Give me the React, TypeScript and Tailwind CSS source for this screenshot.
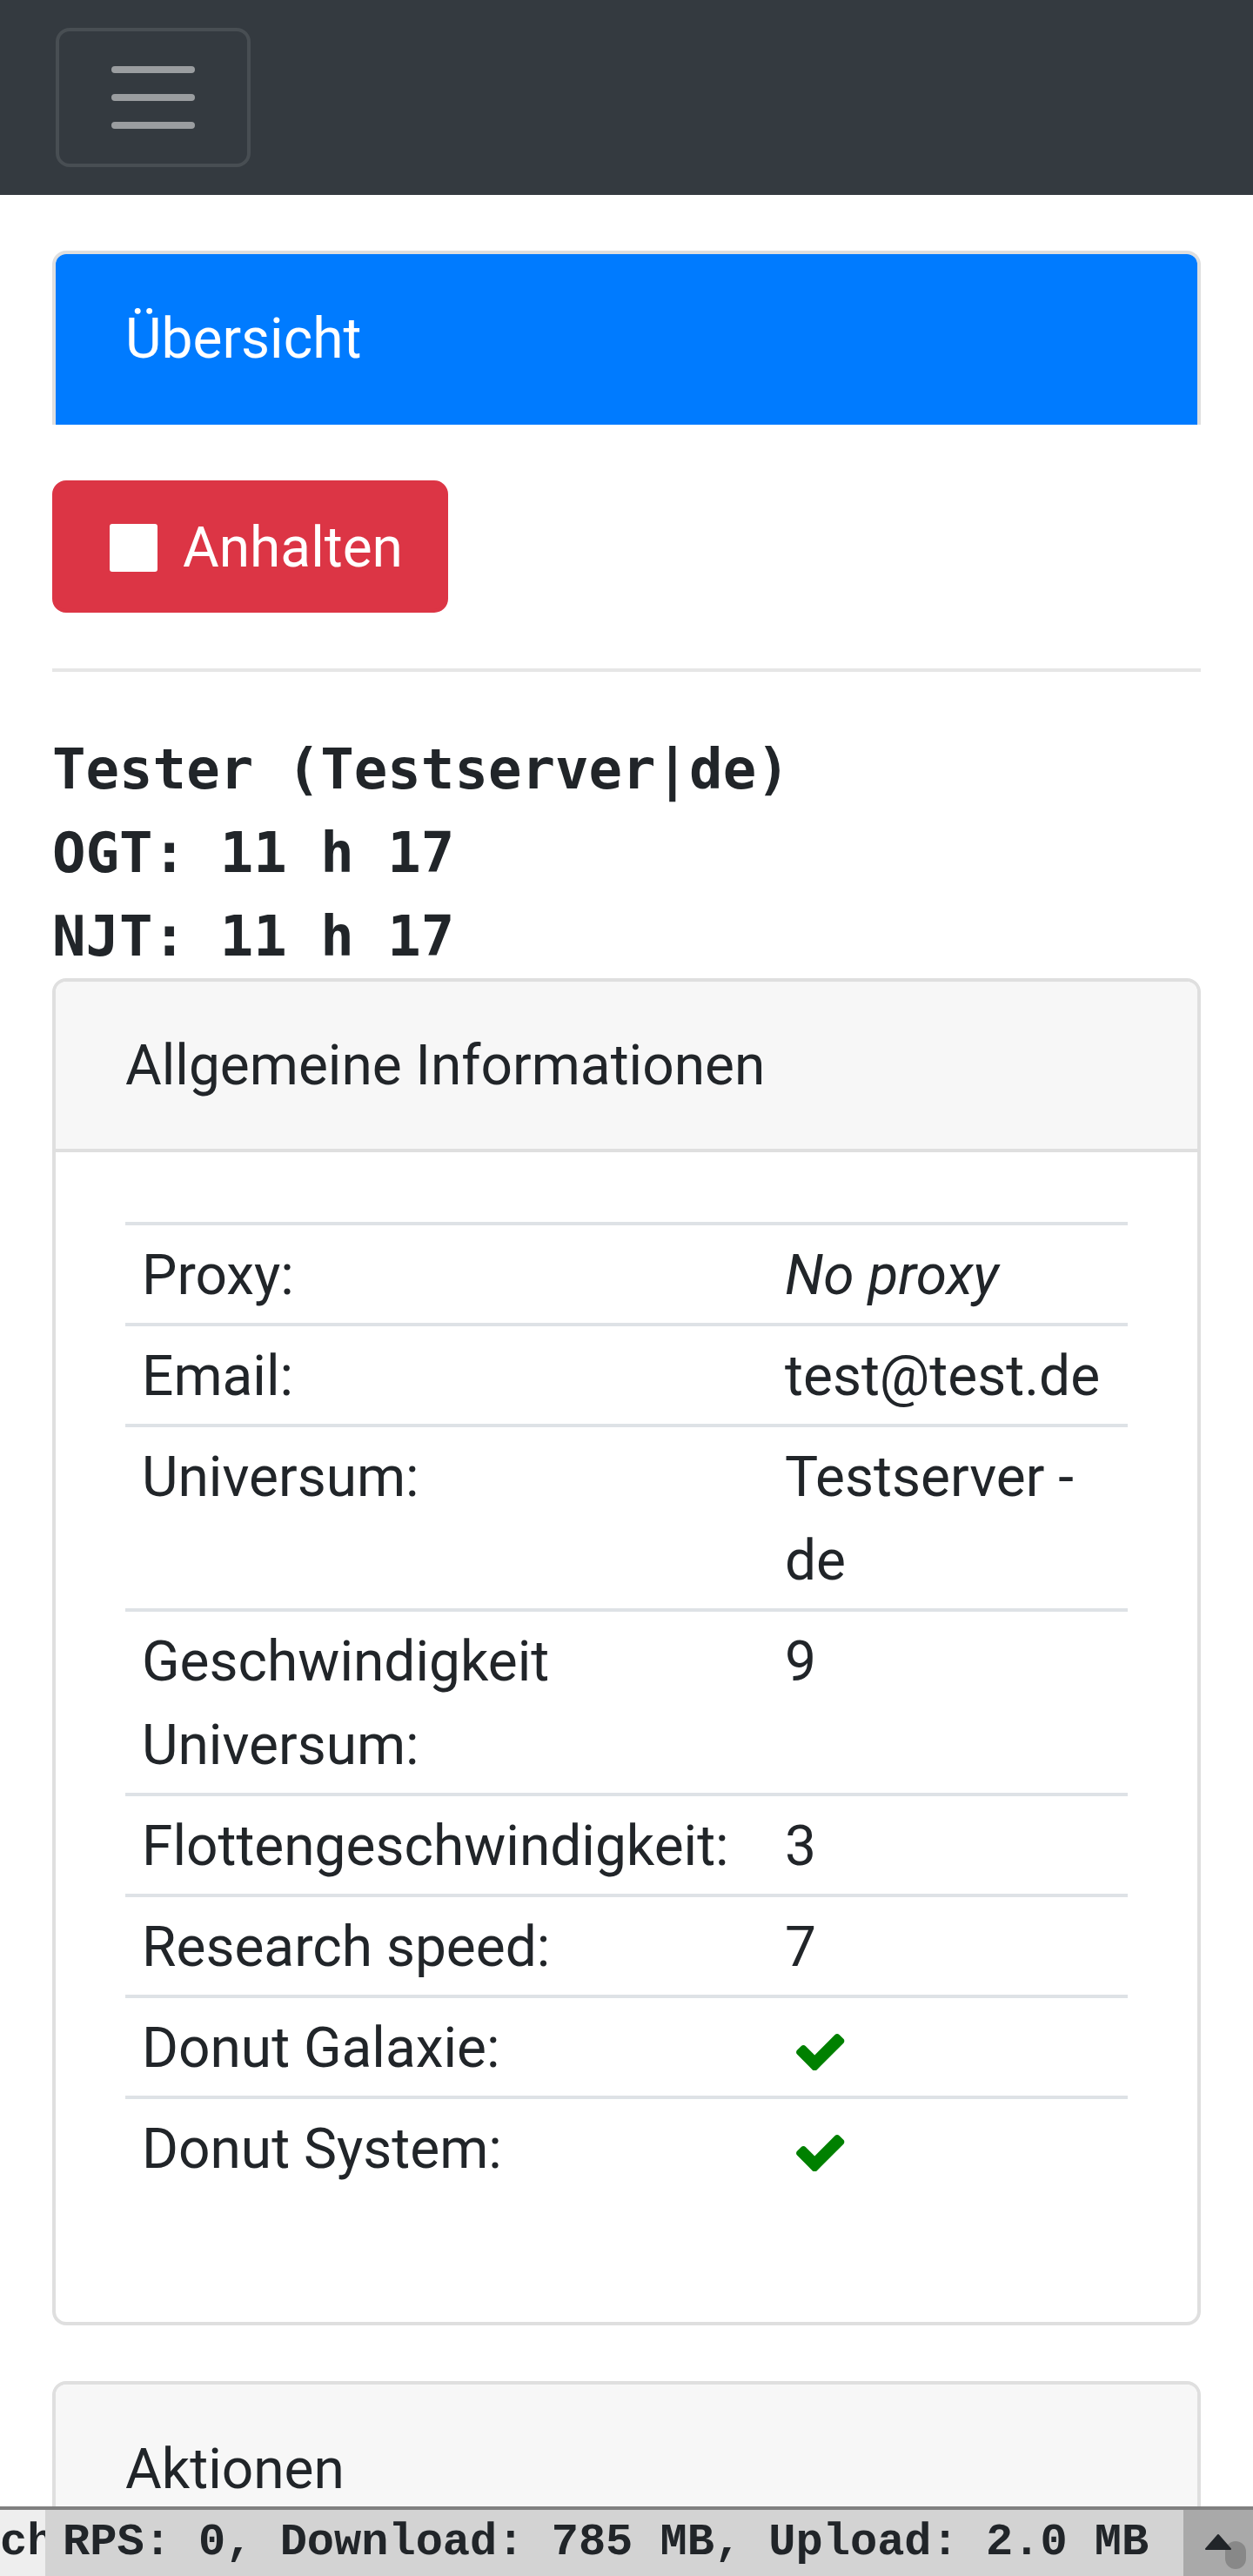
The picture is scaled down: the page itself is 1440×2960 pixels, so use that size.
import React from "react";

function Check() {
  return (
    <span className="inline-block w-[82px] text-center">
      <svg
        className="inline-block"
        width="55.4"
        height="42.4"
        viewBox="121 334 1550 1188"
        fill="#008000"
      >
        <path d="M1671 566q0 40-28 68l-724 724-136 136q-28 28-68 28t-68-28l-136-136-362-362q-28-28-28-68t28-68l136-136q28-28 68-28t68 28l294 295 656-657q28-28 68-28t68 28l136 136q28 28 28 68z" />
      </svg>
    </span>
  );
}

type Row = { label: string; value: React.ReactNode };

const rows: Row[] = [
  { label: "Proxy:", value: <span className="italic">No proxy</span> },
  { label: "Email:", value: "test@test.de" },
  { label: "Universum:", value: "Testserver - de" },
  { label: "Geschwindigkeit Universum:", value: "9" },
  { label: "Flottengeschwindigkeit:", value: "3" },
  { label: "Research speed:", value: "7" },
  { label: "Donut Galaxie:", value: <Check /> },
  { label: "Donut System:", value: <Check /> },
];

export default function App() {
  return (
    <div className="min-h-[2960px] bg-white font-['Roboto',sans-serif] text-[64px] leading-[96px] text-[#212529]">
      <nav className="bg-[#343a40] px-[64px] py-[32px]">
        <button className="flex h-[160px] w-[224px] items-center justify-center rounded-[16px] border-4 border-[#484e53]">
          <svg width="120" height="120" viewBox="0 0 30 30">
            <path
              d="M4 7h22M4 15h22M4 23h22"
              stroke="rgba(255,255,255,0.5)"
              strokeWidth="2"
              strokeLinecap="round"
            />
          </svg>
        </button>
      </nav>

      <main className="px-[60px] pt-[64px] pb-[200px]">
        <div className="mb-[64px] rounded-t-[16px] border-x-4 border-t-4 border-[#dfdfdf]">
          <div className="h-[196px] rounded-t-[12px] bg-[#007bff] px-[80px] pt-[50px] text-white">
            Übersicht
          </div>
        </div>

        <button className="flex w-fit items-center gap-[16px] rounded-[16px] border-4 border-[#dc3545] bg-[#dc3545] px-[48px] pt-[26px] pb-[22px] text-white">
          <span className="flex h-[96px] w-[82px] items-center justify-center">
            <span className="mt-[-1px] h-[55px] w-[55px] rounded-[3px] bg-white" />
          </span>
          <span>Anhalten</span>
        </button>

        <hr className="my-[64px] border-t-4 border-[#e6e6e6]" />

        <div className="font-['DejaVu_Sans_Mono',monospace] font-bold">
          <div>Tester (Testserver|de)</div>
          <div>OGT: 11 h 17</div>
          <div>NJT: 11 h 17</div>
        </div>

        <div className="rounded-[16px] border-4 border-[#dfdfdf]">
          <div className="rounded-t-[12px] border-b-4 border-[#dfdfdf] bg-[#f7f7f7] px-[80px] pt-[49px] pb-[47px]">
            Allgemeine Informationen
          </div>
          <div className="p-[80px]">
            <table className="mb-[64px] w-full table-fixed border-separate border-spacing-0">
              <colgroup>
                <col className="w-[739px]" />
                <col />
              </colgroup>
              <tbody>
                {rows.map((r) => (
                  <tr key={r.label}>
                    <td className="border-t-4 border-[#dee2e6] px-[19px] pt-[10px] pb-[6px] align-top">
                      {r.label}
                    </td>
                    <td className="border-t-4 border-[#dee2e6] px-[19px] pt-[10px] pb-[6px] align-top">
                      {r.value}
                    </td>
                  </tr>
                ))}
              </tbody>
            </table>
          </div>
        </div>

        <div className="mt-[64px] rounded-[16px] border-4 border-[#dfdfdf]">
          <div className="rounded-t-[12px] border-b-4 border-[#dfdfdf] bg-[#f7f7f7] px-[80px] pt-[50px] pb-[46px]">
            Aktionen
          </div>
          <div className="h-[400px] p-[80px]" />
        </div>
      </main>

      <div className="fixed inset-x-0 bottom-0 flex h-[80px] border-t-4 border-[#808080] font-['Liberation_Mono',monospace] text-[52px] font-bold leading-[76px] text-[#212529]">
        <div className="w-[52px] shrink-0 overflow-hidden whitespace-nowrap bg-[#eeeeee]">
          ch
        </div>
        <div className="flex-1 overflow-hidden whitespace-nowrap bg-[#d3d3d3] pl-[20px]">
          RPS: 0, Download: 785 MB, Upload: 2.0 MB
        </div>
        <div className="w-[80px] shrink-0 bg-[#a9a9a9]">
          <svg width="80" height="76" viewBox="0 0 80 76">
            <rect x="48" y="36" width="24" height="32" rx="12" fill="#888888" />
            <path
              d="M40 29 L54 45 L26 45 Z"
              fill="#212529"
              stroke="#212529"
              strokeWidth="2"
              strokeLinejoin="round"
            />
          </svg>
        </div>
      </div>
    </div>
  );
}
